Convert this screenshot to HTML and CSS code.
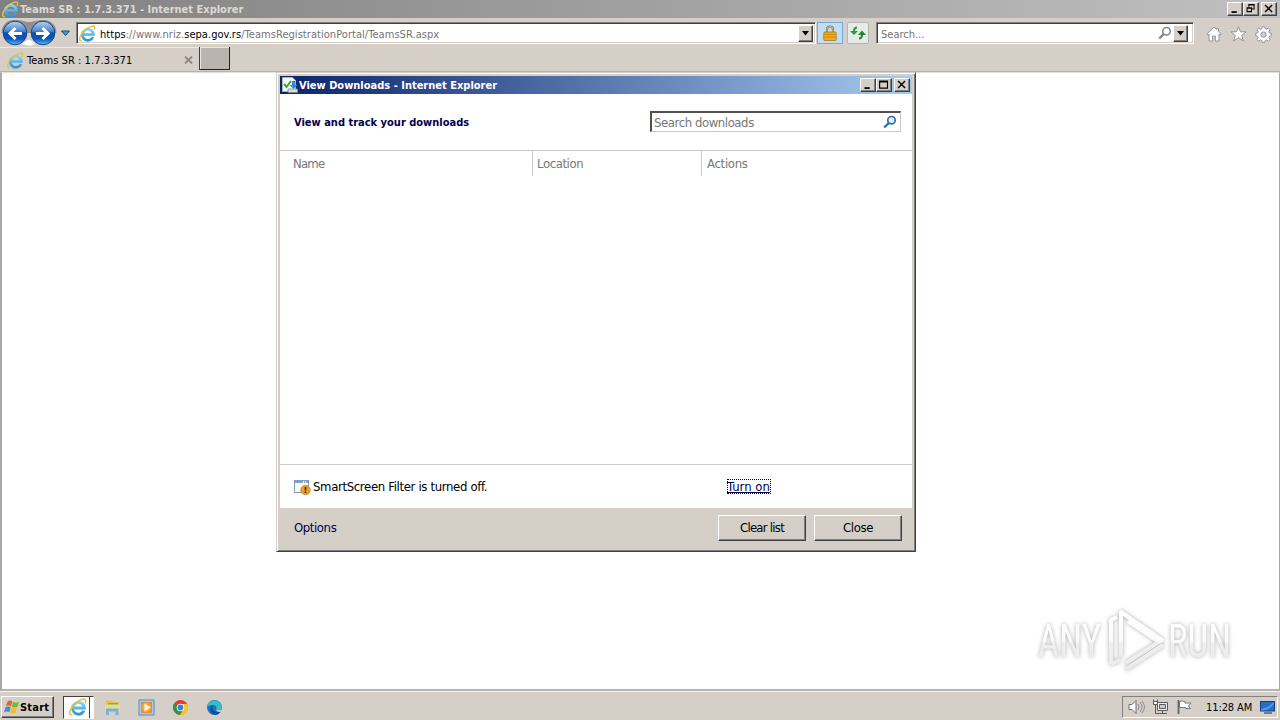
FILE: index.html
```
<!DOCTYPE html>
<html lang="en">
<head>
  <meta charset="UTF-8" />
  <meta name="viewport" content="width=device-width, initial-scale=1.0"/>
  <title>Teams SR : 1.7.3.371 - Internet Explorer</title>
  <link rel="stylesheet" href="styles.css">
</head>
<body>

  <!-- shared icons -->
  <svg class="defs" width="0" height="0">
    <defs>
      <linearGradient id="orb" x1="0" y1="0" x2="0" y2="1">
        <stop offset="0" stop-color="#b9d3ee"/>
        <stop offset=".42" stop-color="#4b86cf"/>
        <stop offset=".5" stop-color="#0d50ad"/>
        <stop offset=".75" stop-color="#0b55bb"/>
        <stop offset="1" stop-color="#55c4f5"/>
      </linearGradient>
      <linearGradient id="eBlue" x1="0" y1="0" x2="0" y2="1">
        <stop offset="0" stop-color="#7fd6f8"/>
        <stop offset="1" stop-color="#2a96da"/>
      </linearGradient>
      <linearGradient id="mark" x1="0" y1="0" x2="0" y2="1">
        <stop offset="0" stop-color="#ffffff"/>
        <stop offset=".5" stop-color="#fbfbfb"/>
        <stop offset=".55" stop-color="#eeeeee"/>
        <stop offset="1" stop-color="#ececec"/>
      </linearGradient>
    </defs>
    <symbol id="ie" viewBox="0 0 16 16">
      <path d="M13.200 11.200A5.200 5.200 0 1 1 13.600 8.900H4.600" fill="none" stroke="url(#eBlue)" stroke-width="2.500"/>
      <path d="M2.800 14.900C-1.300 15.500.8 8.500 5.500 4.700 9.500 1.200 14 .2 14.600 1.700c.3.800.1 1.800-.4 2.900" fill="none" stroke="#ecc035" stroke-width="1.400"/>
    </symbol>
    <symbol id="min" viewBox="0 0 16 13"><path d="M4 10h6" stroke="#000" stroke-width="2"/></symbol>
    <symbol id="max" viewBox="0 0 16 13"><path d="M3 2h9v8H3zM3 3h9" fill="none" stroke="#000" stroke-width="1.300"/></symbol>
    <symbol id="restore" viewBox="0 0 16 13"><path d="M5.500 4V1.500h6v5H9M5 2h7M3.500 5.500h5v4h-5zM3 5h6" fill="none" stroke="#000" stroke-width="1.200"/></symbol>
    <symbol id="close" viewBox="0 0 16 13"><path d="M3.500 2l8 8M11.500 2l-8 8" stroke="#000" stroke-width="1.700"/></symbol>
  </svg>

  <header class="titlebar">
    <svg class="titlebar-icon" width="17" height="17"><use href="#ie"/></svg>
    <span class="titlebar-text">Teams SR : 1.7.3.371 - Internet Explorer</span>
    <div class="win-buttons">
      <button class="win-btn"><svg width="14" height="12"><use href="#min"/></svg></button>
      <button class="win-btn"><svg width="14" height="12"><use href="#restore"/></svg></button>
      <button class="win-btn win-close"><svg width="14" height="12"><use href="#close"/></svg></button>
    </div>
  </header>

  <nav class="toolbar">
    <svg class="nav-orbs" width="72" height="28" viewBox="0 0 72 28">
      <path d="M14 1C24 1 24 3 29 3S36 1 43 1c9 0 13.500 6 13.500 13H1.500C1.500 7 6 1 14 1z" fill="#8f8f8f"/>
      <path d="M22 25q7-8 13 0l-5 2z" fill="#fff"/>
      <circle cx="15" cy="14" r="11.800" fill="url(#orb)" stroke="#17478e"/>
      <circle cx="43" cy="14" r="11.800" fill="url(#orb)" stroke="#17478e"/>
      <path d="M22 14.500H10M15.500 9L10 14.500l5.500 5.500M36 14.500h12M42.500 9l5.500 5.500-5.500 5.500" fill="none" stroke="#fff" stroke-width="3"/>
      <path d="M61.500 12h8l-4 4.500z" fill="#3aa0d8" stroke="#174a72"/>
    </svg>

    <div class="address">
      <svg width="17" height="17"><use href="#ie"/></svg>
      <span class="url"><b>https</b>://www.nriz.<b>sepa.gov.rs</b>/TeamsRegistrationPortal/TeamsSR.aspx</span>
      <button class="drop-btn"><svg width="9" height="5"><path d="M1 0h7L4.500 4.500z"/></svg></button>
    </div>
    <div class="lock">
      <svg width="14" height="16" viewBox="0 0 14 16">
        <path d="M4 8V4.500a3 3 0 0 1 6 0V8" fill="none" stroke="#8b7a3e" stroke-width="2.200"/>
        <path d="M4 8V4.500a3 3 0 0 1 6 0V8" fill="none" stroke="#ddd1a0" stroke-width=".8"/>
        <rect x=".8" y="7" width="12.400" height="8.500" rx="1" fill="#efac1d" stroke="#ad751b" stroke-width=".8"/>
        <path d="M1.500 9.500h11M1.500 12h11" stroke="#c9831a" stroke-width=".8"/>
      </svg>
    </div>
    <div class="refresh">
      <svg width="16" height="14" viewBox="0 0 16 14">
        <path d="M7 1.500C4.500 1.500 4 3 4 5" fill="none" stroke="#2c9a35" stroke-width="2"/>
        <path d="M0 5h8L4 9z" fill="#2c9a35"/>
        <path d="M9 12.500c2.500 0 3-1.500 3-4" fill="none" stroke="#23842c" stroke-width="2"/>
        <path d="M8 9h8l-4-4.500z" fill="#23842c"/>
      </svg>
    </div>
    <div class="search">
      <span class="search-text">Search...</span>
      <svg width="14" height="14" viewBox="0 0 14 14" fill="none" stroke="#858585"><circle cx="8.500" cy="5.200" r="3.800" stroke-width="1.500"/><path d="M5.700 8L1.200 12.500" stroke-width="2.400"/></svg>
      <button class="drop-btn"><svg width="9" height="5"><path d="M1 0h7L4.500 4.500z"/></svg></button>
    </div>
    <div class="tools">
      <svg width="16" height="16" viewBox="0 0 16 16"><path d="M8 1L.8 8l1 1L3 8.200V15h3.700v-5h2.600v5H13V8.200l1.200.8 1-1L12.500 5.300V2.500h-2v1z" fill="#fff" stroke="#949494"/></svg>
      <svg width="17" height="16" viewBox="0 0 17 16"><path d="M8.500.8l2 5h5.700l-4.500 3.600 1.700 5.600-4.900-3.300L3.600 15l1.700-5.600L.8 5.800h5.700z" fill="#fff" stroke="#949494"/></svg>
      <svg width="17" height="17" viewBox="0 0 17 17">
        <path d="M7.200.8h2.600l.4 2 1.300.5L13.300 2l1.800 1.800-1.300 1.800.5 1.300 2 .4v2.600l-2 .4-.5 1.300 1.300 1.800-1.800 1.800-1.800-1.300-1.300.5-.4 2H7.200l-.4-2-1.300-.5-1.800 1.300-1.800-1.800 1.300-1.800-.5-1.300-2-.4V7.300l2-.4.5-1.300-1.300-1.800L3.700 2l1.800 1.300 1.300-.5z" fill="#fff" stroke="#949494"/>
        <circle cx="8.500" cy="8.600" r="2.700" fill="#d4cfc8" stroke="#949494"/>
      </svg>
    </div>
  </nav>

  <div class="tabs">
    <div class="tab">
      <svg width="17" height="17"><use href="#ie"/></svg>
      <span class="tab-text">Teams SR : 1.7.3.371</span>
      <svg class="tab-close" width="9" height="8" viewBox="0 0 9 8"><path d="M1 .5l7 7M8 .5l-7 7" stroke="#8b8782" stroke-width="1.800"/></svg>
    </div>
    <div class="new-tab"></div>
  </div>

  <main class="page">
    <svg class="watermark" width="220" height="70" viewBox="0 0 220 70">
      <g class="mark-shape">
        <g class="mark-text">
          <text x="7" y="51" textLength="63" lengthAdjust="spacingAndGlyphs">ANY</text>
          <text x="137" y="51" textLength="63" lengthAdjust="spacingAndGlyphs">RUN</text>
        </g>
        <path d="M80 58V14l6-3M90 51V6l41 28-36 23M95 63l37-24M97 15l31 21M80 58l9-4M90 42V14" fill="none" stroke="url(#mark)" stroke-width="4" stroke-linejoin="round"/>
      </g>
    </svg>
  </main>

  <section class="dialog">
    <div class="dialog-inner">
      <div class="dialog-title">
        <svg class="dialog-icon" width="16" height="16" viewBox="0 0 16 16">
          <path d="M.5.500h10l3 3v11H.500z" fill="#f4f7f8" stroke="#a4b4bc"/>
          <path d="M2 7l2.500 3L9 4" fill="none" stroke="#42a13b" stroke-width="2"/>
          <path d="M10 4h3v4h2.500L11.500 12l-4-4H10z" fill="#2e87dc"/>
          <path d="M6 12h9.500v3.500H6z" fill="#d8dde0" stroke="#7d8a92" stroke-width=".8"/>
        </svg>
        <span class="dialog-title-text">View Downloads - Internet Explorer</span>
        <div class="win-buttons">
          <button class="win-btn"><svg width="14" height="12"><use href="#min"/></svg></button>
          <button class="win-btn"><svg width="14" height="12"><use href="#max"/></svg></button>
          <button class="win-btn win-close"><svg width="14" height="12"><use href="#close"/></svg></button>
        </div>
      </div>
      <div class="dialog-head">
        <h1>View and track your downloads</h1>
        <div class="dl-search">
          <span class="dl-search-text">Search downloads</span>
          <svg width="14" height="14" viewBox="0 0 14 14" fill="none" stroke="#2c6cb3"><circle cx="8.500" cy="5.200" r="3.700" fill="#dff0fa" stroke-width="1.700"/><path d="M5.700 8L1.200 12.500" stroke-width="2.400"/></svg>
        </div>
      </div>
      <div class="columns">
        <span class="col col-name">Name</span>
        <span class="col col-location">Location</span>
        <span class="col col-actions">Actions</span>
      </div>
      <div class="list"></div>
      <div class="smartscreen">
        <svg width="17" height="16" viewBox="0 0 17 16">
          <rect x=".5" y="1.500" width="14" height="12" fill="#fff" stroke="#7f9eb8"/>
          <path d="M1 3h13" stroke="#7aa5d2" stroke-width="2" stroke-dasharray="8 1 1 1"/>
          <circle cx="11.500" cy="11" r="4.700" fill="#eca02a" stroke="#bc7516" stroke-width=".7"/>
          <path d="M11.500 8v3.500M11.500 12.500V14" stroke="#402708" stroke-width="1.600"/>
        </svg>
        <span class="smart-text">SmartScreen Filter is turned off.</span>
        <a class="turn-on">Turn on</a>
      </div>
      <div class="dialog-foot">
        <a class="options">Options</a>
        <button class="btn">Clear list</button>
        <button class="btn">Close</button>
      </div>
    </div>
  </section>

  <footer class="taskbar">
    <button class="start">
      <svg width="16" height="16" viewBox="0 0 16 16">
        <path d="M3.500 2.500q2.500-1.800 4.800-.2L7 7.400q-2.500-1.600-5.200 0z" fill="#e8602c"/>
        <path d="M9 2.700q2.700 1.500 6 0l-1.500 5q-2.800 1.500-5.700.1z" fill="#78b83c"/>
        <path d="M1.500 8.300q2.700-1.500 5.200 0L5.300 13.300q-2.500-1.500-5.200 0z" fill="#3f8fd4"/>
        <path d="M7.500 8.700q2.600 1.300 5.600 0l-1.500 5q-2.700 1.400-5.500.1z" fill="#f5bd2a"/>
      </svg>
      <span>Start</span>
    </button>
    <div class="task-active"><svg width="18" height="18"><use href="#ie"/></svg></div>
    <div class="quick">
      <svg width="17" height="17" viewBox="0 0 17 17">
        <path d="M2 1.500h5l1 1.500h6.500v6H2z" fill="#dfc062"/><path d="M4 4h10v4H4z" fill="#75b34d"/><path d="M1 5.500h14.500V13H1z" fill="#f1da82"/>
        <path d="M2 16v-5.500q0-1 1-1h10.500q1 0 1 1V16h-3v-3.500H5V16z" fill="#74b3dc"/>
      </svg>
      <svg width="17" height="17" viewBox="0 0 17 17">
        <rect x="1" y="1" width="15" height="15" fill="#a9cce9" stroke="#548ec2"/><rect x="3" y="3" width="11" height="11" fill="#f08a17"/>
        <circle cx="8.500" cy="8.500" r="5" fill="#f8a43c"/><path d="M6.500 4.500v8l6-4z" fill="#fff"/>
      </svg>
      <svg width="17" height="17" viewBox="0 0 17 17">
        <circle cx="8.500" cy="8.500" r="7.500" fill="#e33b2e"/>
        <path d="M8.500 8.500L2 4.750A7.500 7.500 0 0 0 8 16l3.750-5.600z" fill="#269a48"/>
        <path d="M8.500 5H15.200A7.500 7.500 0 0 1 8 16l3.600-5.700z" fill="#fbc71b"/>
        <circle cx="8.500" cy="8.500" r="3.800" fill="#fff"/><circle cx="8.500" cy="8.500" r="2.900" fill="#3b7de0"/>
      </svg>
      <svg width="17" height="17" viewBox="0 0 17 17">
        <circle cx="8.500" cy="8.500" r="7.500" fill="#1474c4"/>
        <path d="M1 8C2 0 14-1 16 7.500c.3 3-3 4.500-6 3 1.500-2 0-4.500-3-4.500-2.500 0-5 .5-6 2z" fill="#38bdc5"/>
        <path d="M7 6.500c-2 3 .5 7.500 7.500 6.500-2 3-7 4-9.500 0-1.500-2.500-.5-5.500 2-6.500z" fill="#0d4f9e"/>
        <path d="M10 10.500c1.500 1 4 .9 5.500 0v1.800c-2 1.200-4.500.9-5.500-1.800z" fill="#d4d0c8"/>
      </svg>
    </div>
    <div class="tray">
      <svg width="17" height="16" viewBox="0 0 17 16" fill="none" stroke="#6e6e6e">
        <path d="M1 5.500h3L8 1.500v13l-4-4H1z" fill="#fff"/><path d="M10 5q2 3 0 6M12 3q4 5 0 10M14 2q5 6 0 12" stroke="#8e8e8e"/>
      </svg>
      <svg width="17" height="16" viewBox="0 0 17 16" fill="none" stroke="#5c5c5c">
        <path d="M5.500 3.500h10v8h-10z" fill="#eee"/><path d="M7.500 5.500h6v4h-6z" fill="#c9c9c9"/><path d="M1.500.5v3M5.500.5v3M3.500 6v8.500H15M10.500 11.500v3"/><path d="M1.500 2.500h4v3h-4z" fill="#fff"/>
      </svg>
      <svg width="17" height="16" viewBox="0 0 17 16">
        <path d="M3.500 2.500q3-1 5.500 0v1.500h6L12.500 7l2 2.500h-5V8.500h-6z" fill="#fff" stroke="#777"/><path d="M2.500 1v14" stroke="#666" stroke-width="1.800"/>
      </svg>
      <span class="clock">11:28 AM</span>
      <svg class="desk" width="15" height="13" viewBox="0 0 15 13"><rect x=".5" y=".5" width="14" height="9.500" fill="#236fc9" stroke="#173f78"/><path d="M1 8q7-1 13-7v2q-5 6-11 6.500H1z" fill="#4f9ae3"/><path d="M4 12h8" stroke="#40638d" stroke-width="1.500"/></svg>
    </div>
  </footer>

</body>
</html>
```

FILE: styles.css
```
* {
  margin: 0; padding: 0; box-sizing: border-box;
}
body {
  width: 1280px;
  height: 720px;
  overflow: hidden;
  display: flex;
  flex-direction: column;
  position: relative;
  background: #d5cfc8;
  font-family: 'DejaVu Sans Condensed', 'DejaVu Sans', sans-serif;
  font-stretch: condensed;
  font-size: 11px;
  color: #000;
}
svg {
  display: block;
  flex: none;
}
span, a, h1 {
  white-space: nowrap;
}
button {
  font: inherit;
  letter-spacing: inherit;
  background: #d5cfc8;
  border: none;
}
.defs {
  position: absolute;
}

/* browser window */
.titlebar {
  height: 18px;
  flex: none;
  display: flex;
  align-items: center;
  padding: 0 3px 0 2px;
  background: linear-gradient(to right, #808080, #c0c0c0);
}
.titlebar-text {
  margin-left: 1px;
  color: #dcd9d3;
  font-weight: bold;
  font-size: 11px;
}
.win-buttons {
  margin-left: auto;
  display: flex;
}
.win-btn {
  width: 16px;
  height: 14px;
  border: 1px solid;
  border-color: #fff #404040 #404040 #fff;
  box-shadow: inset -1px -1px #808080;
}
.win-close {
  margin-left: 2px;
}
.toolbar {
  height: 29px;
  flex: none;
  display: flex;
  align-items: center;
  padding-top: 1px;
}
.nav-orbs {
  margin-right: 4px;
}
.address, .search {
  height: 22px;
  display: flex;
  align-items: center;
  background: #fff;
  border: 1px solid;
  border-color: #808080 #fff #fff #808080;
  box-shadow: inset 1px 1px #404040, inset -1px -1px #d5cfc8;
  color: #747474;
}
.address {
  width: 740px;
  padding: 2px 2px 2px 2px;
}
.address b {
  font-weight: normal;
  color: #000;
}
.url {
  margin-left: 4px;
  padding-top: 2px;
  letter-spacing: .05px;
}
.search-text {
  padding-top: 2px;
}
.drop-btn {
  margin-left: auto;
  width: 15px;
  height: 17px;
  display: flex;
  align-items: center;
  justify-content: center;
  border: 1px solid;
  border-color: #fff #404040 #404040 #fff;
  box-shadow: inset -1px -1px #808080;
}
.lock, .refresh {
  height: 22px;
  display: flex;
  align-items: center;
  justify-content: center;
}
.lock {
  width: 26px;
  margin-left: 1px;
  background: #c3ddf8;
  border: 1px solid #74a9e0;
}
.refresh {
  width: 22px;
  margin-left: 4px;
  background: #e6ebe9;
  border: 1px solid #b3b3b1;
  border-radius: 2px;
}
.search {
  width: 318px;
  margin-left: 7px;
  padding: 2px 5px 2px 4px;
}
.search svg:first-of-type {
  margin-left: auto;
}
.search .drop-btn {
  margin-left: 1px;
}
.search .drop-btn svg {
  margin: 0;
}
.tools {
  display: flex;
  gap: 8px;
  margin: 3px 0 0 12px;
}
.tabs {
  height: 25px;
  flex: none;
  display: flex;
  border-bottom: 1px solid #b5b4a9;
}
.tab {
  width: 199px;
  display: flex;
  align-items: center;
  padding: 1px 6px 0 7px;
  border-top: 1px solid #eceae6;
}
.tab-text {
  margin-left: 3px;
  letter-spacing: .05px;
}
.tab-close {
  margin-left: auto;
}
.new-tab {
  width: 31px;
  height: 23px;
  background: #bab4ae;
  border: solid #202020;
  border-width: 0 1px 1px;
  border-left-color: #404040;
  box-shadow: inset 1px 1px #e8e6e2;
}
.page {
  flex: 1;
  display: flex;
  align-items: flex-end;
  justify-content: flex-end;
  background: #fff;
  border: 1px solid #a7a7a4;
  border-top-color: #e1e0dc;
  border-left-width: 2px;
  border-bottom: 2px solid #b8b4ad;
  padding: 0 28px 13px 0;
}
.mark-text {
  font-family: 'Roboto', sans-serif;
  font-size: 46px;
  fill: url(#mark);
}
.mark-shape {
  filter: drop-shadow(0 0 2px rgba(0, 0, 0, .32));
}

/* downloads dialog */
.dialog {
  position: absolute;
  left: 276px;
  top: 72px;
  width: 640px;
  height: 480px;
  padding: 1px;
  background: #d5cfc8;
  border: 1px solid;
  border-color: #d5cfc8 #404040 #404040 #d5cfc8;
  box-shadow: inset 1px 1px #fff, inset -1px -1px #808080;
}
.dialog-inner {
  height: 100%;
  padding: 2px 2px 0 2px;
  display: flex;
  flex-direction: column;
}
.dialog-title {
  height: 18px;
  flex: none;
  display: flex;
  align-items: center;
  padding: 0 2px;
  background: linear-gradient(to right, #0a246a, #a6caf0);
}
.dialog-title-text {
  margin-left: 1px;
  color: #fff;
  font-weight: bold;
}
.dialog-head {
  height: 57px;
  flex: none;
  display: flex;
  align-items: center;
  justify-content: space-between;
  padding: 0 11px 2px 14px;
  background: #fff;
  border-bottom: 1px solid #cdcbc8;
}
.dialog-head h1 {
  font-size: 11px;
  color: #00004f;
  padding-top: 3px;
}
.dl-search {
  width: 251px;
  height: 21px;
  display: flex;
  align-items: center;
  justify-content: space-between;
  padding: 1px 3px 0 2px;
  border: solid;
  border-width: 2px 1px 1px 2px;
  border-color: #505050 #ccc9c4 #ccc9c4 #505050;
  font-size: 13px;
  letter-spacing: -.42px;
  color: #777;
}
.columns {
  height: 25px;
  flex: none;
  display: flex;
  background: #fff;
  color: #777;
  font-size: 13px;
  letter-spacing: -.4px;
  line-height: 25px;
}
.col {
  padding-left: 4px;
  border-left: 1px solid #cdcbc8;
}
.col-name {
  width: 252px;
  padding-left: 13px;
  letter-spacing: -.8px;
  border: none;
}
.col-location {
  width: 169px;
}
.col-actions {
  letter-spacing: -.3px;
  padding-left: 5px;
}
.list {
  flex: 1;
  background: #fff;
}
.smartscreen {
  height: 44px;
  flex: none;
  display: flex;
  align-items: center;
  padding-left: 14px;
  background: #fff;
  border-top: 1px solid #cdcbc8;
  font-size: 13px;
  letter-spacing: -.34px;
}
.smart-text {
  margin-left: 2px;
  width: 414px;
}
.turn-on {
  width: 44px;
  height: 15px;
  line-height: 15px;
  outline: 1px dotted #000;
  outline-offset: -1px;
  color: #00004f;
  text-decoration: underline;
  letter-spacing: 0;
}
.dialog-foot {
  height: 42px;
  flex: none;
  display: flex;
  align-items: center;
  padding: 0 10px 3px 14px;
  font-size: 13px;
  letter-spacing: -.4px;
}
.options {
  margin-right: auto;
  color: #00004f;
}
.btn {
  width: 88px;
  height: 26px;
  margin-left: 8px;
  border: 1px solid;
  border-color: #fff #404040 #404040 #fff;
  box-shadow: inset -1px -1px #808080;
}
.btn:first-of-type {
  letter-spacing: -.75px;
}

/* taskbar */
.taskbar {
  height: 29px;
  flex: none;
  display: flex;
  align-items: center;
  padding: 2px 2px 0 1px;
  border-top: 1px solid #f5f4f2;
}
.start {
  width: 53px;
  height: 22px;
  display: flex;
  align-items: center;
  padding: 1px 2px;
  border: 1px solid;
  border-color: #fff #404040 #404040 #fff;
  box-shadow: inset -1px -1px #808080;
  font-weight: bold;
  letter-spacing: .2px;
}
.task-active {
  width: 31px;
  height: 23px;
  margin-left: 9px;
  padding-right: 2px;
  display: flex;
  align-items: center;
  justify-content: center;
  background: #fbfaf8;
  border: 1px solid;
  border-color: #404040 #fff #fff #404040;
  box-shadow: inset -3px 0 #fff, inset -4px 0 #404040;
}
.quick {
  display: flex;
  gap: 17px;
  margin-left: 10px;
}
.tray {
  height: 22px;
  margin-left: auto;
  display: flex;
  align-items: center;
  width: 156px;
  padding: 0 2px 0 5px;
  gap: 7px;
  border: 1px solid;
  border-color: #808080 #fff #fff #808080;
}
.clock {
  margin-left: 6px;
  letter-spacing: -.1px;
}
.desk {
  margin-left: auto;
}
```
